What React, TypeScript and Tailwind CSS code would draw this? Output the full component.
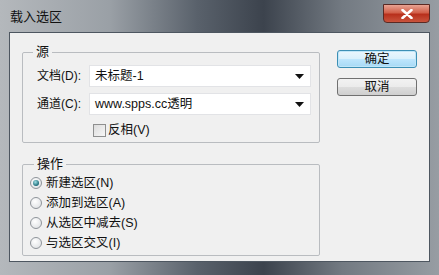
import { useState } from 'react'

const font = "font-['Liberation_Sans','Noto_Sans_CJK_SC',sans-serif]"

function Select({ value }: { value: string }) {
  return (
    <div className="w-[222px] h-[22px] bg-white border border-[#e2e3e6] flex items-center pl-[5px] pr-[6px]">
      <span className="flex-1 text-[12.5px] leading-none text-[#111]">{value}</span>
      <svg width="9" height="5" viewBox="0 0 9 5">
        <path d="M0 0h9L4.5 5z" fill="#111" />
      </svg>
    </div>
  )
}

function Radio({ checked }: { checked: boolean }) {
  return (
    <span className="w-[12px] h-[12px] rounded-full border border-[#8f949a] bg-[radial-gradient(circle_at_40%_35%,#ffffff,#d9dcdf)] flex items-center justify-center shrink-0">
      {checked && (
        <span className="w-[6px] h-[6px] rounded-full bg-[radial-gradient(circle_at_40%_35%,#9fe0e6,#1d6b78_70%)]" />
      )}
    </span>
  )
}

export default function App() {
  const [op, setOp] = useState(0)
  const [invert, setInvert] = useState(false)

  const ops = ['新建选区(N)', '添加到选区(A)', '从选区中减去(S)', '与选区交叉(I)']

  return (
    <div className={`w-[439px] h-[275px] overflow-hidden bg-[linear-gradient(90deg,#b4b8bc_0%,#9aa0a6_25%,#59616b_45%,#3c434d_60%,#737a82_78%,#979da3_100%)] ${font}`}>
      {/* Title bar */}
      <div className="h-[32px] flex justify-between pl-[10px] pr-[9px]">
        <span className="text-[13px] leading-none text-[#111] mt-[10px]">载入选区</span>
        <div className="mt-[4px] w-[47px] h-[19px] rounded-b-[4px] border border-[#5a2a24] bg-[linear-gradient(180deg,#e8a393_0%,#d2604a_45%,#b8301c_55%,#c9543d_100%)] flex items-center justify-center">
          <svg width="12" height="10" viewBox="0 0 12 10">
            <path d="M1.5 1l9 8M10.5 1l-9 8" stroke="#fff" strokeWidth="2.6" strokeLinecap="round" />
          </svg>
        </div>
      </div>

      {/* Client area */}
      <div className="mx-[9px] h-[230px] bg-[#f0f0f0] border border-[#4d5660] flex text-[12px] text-[#111]">
        <div className="pl-[12px] pt-[11px]">
          {/* 源 */}
          <fieldset className="w-[298px] h-[99px] border border-[#b9bcc0] rounded-[2px]">
            <legend className="ml-[10px] px-[3px] text-[13px] leading-[16px]">源</legend>
            <div className="pl-[14px] pr-[8px] pt-[5px] flex flex-col">
              <div className="flex items-center">
                <span className="w-[52px]">文档(D):</span>
                <Select value="未标题-1" />
              </div>
              <div className="flex items-center mt-[6px]">
                <span className="w-[52px]">通道(C):</span>
                <Select value="www.spps.cc透明" />
              </div>
              <label className="flex items-center mt-[6px] ml-[56px] cursor-default" onClick={() => setInvert(!invert)}>
                <span className="w-[13px] h-[13px] border border-[#8e8f8f] bg-[linear-gradient(135deg,#dcdcdc,#f7f7f7)] flex items-center justify-center">
                  {invert && <span className="text-[10px] leading-none">✓</span>}
                </span>
                <span className="ml-[2px] text-[12.5px]">反相(V)</span>
              </label>
            </div>
          </fieldset>

          {/* 操作 */}
          <fieldset className="mt-[13px] w-[298px] h-[100px] border border-[#b9bcc0] rounded-[2px]">
            <legend className="ml-[11px] px-[3px] text-[13px] leading-[16px]">操作</legend>
            <div className="pl-[7px] pt-[1px] flex flex-col">
              {ops.map((o, i) => (
                <div key={i} className="h-[20px] flex items-center gap-[4px]" onClick={() => setOp(i)}>
                  <Radio checked={op === i} />
                  <span className="text-[12.5px]">{o}</span>
                </div>
              ))}
            </div>
          </fieldset>
        </div>

        {/* Buttons */}
        <div className="ml-[17px] pt-[17px] flex flex-col gap-[10px]">
          <button className="w-[80px] h-[18px] rounded-[3px] border border-[#3c8fb5] bg-[linear-gradient(180deg,#eaf6fd_0%,#d9f0fc_50%,#bee6fd_51%,#a7d9f5_100%)] shadow-[inset_0_0_0_1px_#c0e6f8] text-[12.5px] leading-none">
            确定
          </button>
          <button className="w-[80px] h-[18px] rounded-[3px] border border-[#707070] bg-[linear-gradient(180deg,#f2f2f2_0%,#ebebeb_50%,#dddddd_51%,#cfcfcf_100%)] text-[12.5px] leading-none">
            取消
          </button>
        </div>
      </div>
    </div>
  )
}
